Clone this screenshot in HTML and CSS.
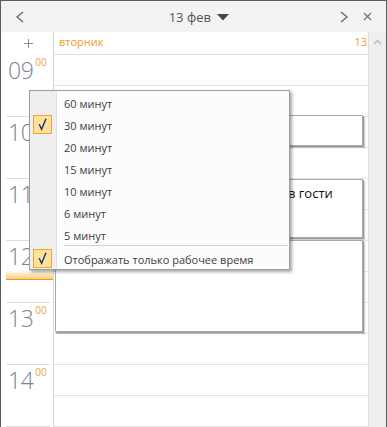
FILE: index.html
```html
<!DOCTYPE html>
<html lang="ru">
<head>
<meta charset="utf-8">
<title>Календарь</title>
<link rel="stylesheet" href="styles.css">
</head>
<body>
<div class="win">
  <header class="top">
    <svg class="ico prev" width="10" height="12" viewBox="0 0 10 12"><path d="M8 1 L2 6 L8 11" fill="none" stroke="#666" stroke-width="1.3"/></svg>
    <div class="title">13 фев <svg class="tri" width="12" height="7" viewBox="0 0 12 7"><path d="M0 0 H12 L6 6.5 Z" fill="#454545"/></svg></div>
    <svg class="ico next" width="10" height="12" viewBox="0 0 10 12"><path d="M2 1 L8 6 L2 11" fill="none" stroke="#666" stroke-width="1.3"/></svg>
    <svg class="ico close" width="9" height="9" viewBox="0 0 9 9"><path d="M1 1 L8 8 M8 1 L1 8" fill="none" stroke="#777" stroke-width="1.3"/></svg>
  </header>
  <div class="main">
    <div class="times">
      <div class="add"><svg width="9" height="9" viewBox="0 0 9 9"><path d="M4.5 0 V9 M0 4.5 H9" stroke="#8a8a8a" stroke-width="1"/></svg></div>
      <div class="hour"><span class="hh">09</span><span class="mm">00</span></div>
      <div class="hour"><span class="hh">10</span><span class="mm">00</span></div>
      <div class="hour"><span class="hh">11</span><span class="mm">00</span></div>
      <div class="hour"><span class="hh">12</span><span class="mm">00</span></div>
      <div class="hour"><span class="hh">13</span><span class="mm">00</span></div>
      <div class="hour"><span class="hh">14</span><span class="mm">00</span></div>
      <div class="now"></div>
    </div>
    <div class="day">
      <div class="dayhead"><span class="dname">вторник</span><span class="dnum">13</span></div>
      <div class="slots">
        <div class="slot"></div><div class="slot"></div><div class="slot"></div><div class="slot"></div>
        <div class="slot"></div><div class="slot"></div><div class="slot"></div><div class="slot"></div>
        <div class="slot"></div><div class="slot"></div><div class="slot"></div><div class="slot"></div>
      </div>
      <div class="event" style="top:83px;height:31px"></div>
      <div class="event" style="top:147px;height:59px">Вечером идём всей семьёй к маме в гости</div>
      <div class="event" style="top:208px;height:92px"></div>
    </div>
    <div class="scroll"><svg width="9" height="6" viewBox="0 0 9 6"><path d="M1 5 L4.5 1.5 L8 5" fill="none" stroke="#bcbcbc" stroke-width="1.5"/></svg></div>
  </div>

  <div class="menu">
    <div class="item"><span class="gut"></span><span class="lbl">60 минут</span></div>
    <div class="item"><span class="gut"><span class="chk"><svg width="17" height="17" viewBox="0 0 17 17"><path d="M5.2 8.3 L7.6 13.2 L12 2.8" fill="none" stroke="#232b6e" stroke-width="1.4"/></svg></span></span><span class="lbl">30 минут</span></div>
    <div class="item"><span class="gut"></span><span class="lbl">20 минут</span></div>
    <div class="item"><span class="gut"></span><span class="lbl">15 минут</span></div>
    <div class="item"><span class="gut"></span><span class="lbl">10 минут</span></div>
    <div class="item"><span class="gut"></span><span class="lbl">6 минут</span></div>
    <div class="item"><span class="gut"></span><span class="lbl">5 минут</span></div>
    <div class="sep"><span class="gut"></span><span class="line"></span></div>
    <div class="item"><span class="gut"><span class="chk"><svg width="17" height="17" viewBox="0 0 17 17"><path d="M5.2 8.3 L7.6 13.2 L12 2.8" fill="none" stroke="#232b6e" stroke-width="1.4"/></svg></span></span><span class="lbl">Отображать только рабочее время</span></div>
  </div>
</div>
</body>
</html>
```

FILE: styles.css
```css
* { box-sizing: border-box; }
html, body { margin: 0; padding: 0; background: #fff; }
body { font-family: "Open Sans", "Noto Sans", sans-serif; }

.win {
  position: relative;
  width: 387px;
  height: 427px;
  border: 1px solid #5c5c5c;
  border-bottom: none;
  overflow: hidden;
  background: #fff;
}

/* header */
.top {
  height: 31px;
  background: #f3f3f3;
  display: flex;
  align-items: center;
}
.ico { display: block; flex: none; }
.prev { margin-left: 14px; }
.title {
  flex: 1;
  text-align: center;
  padding-left: 34px;
  font-size: 13px;
  color: #555;
  line-height: 31px;
  padding-top: 1px;
  white-space: nowrap;
}
.tri { display: inline-block; vertical-align: 1px; margin-left: 3px; }
.close { margin-left: 14px; margin-right: 14px; }

/* main area */
.main {
  display: flex;
  height: 395px;
}
.times {
  position: relative;
  width: 52px;
  flex: none;
}
.add {
  height: 23px;
  display: flex;
  align-items: center;
  justify-content: center;
  padding-left: 2px;
}
.hour {
  height: 62px;
  margin: 0 3px 0 5px;
  border-bottom: 1px solid #dedede;
  display: flex;
  align-items: flex-start;
  padding: 4px 0 0 2px;
}
.hh {
  font-size: 23px;
  line-height: 23px;
  font-weight: 300;
  color: #7b8491;
  letter-spacing: -0.5px;
}
.mm {
  font-size: 10px;
  line-height: 10px;
  color: #e9a23f;
  margin: -2px 0 0 2px;
}
.now {
  position: absolute;
  left: 5px;
  right: 0;
  top: 239px;
  height: 9px;
  background: linear-gradient(to bottom, #fff9e8, #f7cf80);
  border-bottom: 1px solid #e39a2a;
}

.day {
  position: relative;
  flex: 1;
  border-left: 1px solid #d8d8d8;
  border-right: 1px solid #dcdcdc;
}
.dayhead {
  height: 23px;
  border-bottom: 1px solid #dedede;
  display: flex;
  justify-content: space-between;
  padding: 0 1px 0 5px;
  font-size: 11px;
  line-height: 20px;
  color: #f39a1e;
}
.slot {
  height: 31px;
  border-bottom: 1px solid #e4e4e4;
}
.event {
  position: absolute;
  left: 1px;
  width: 308px;
  background: #fff;
  border: 1px solid #a9a9a9;
  box-shadow: 1px 1px 0 #9c9c9c, 2px 2px 1px rgba(0,0,0,0.18);
  padding: 4px 4px 2px 7px;
  font-size: 13px;
  line-height: 18px;
  color: #111;
  white-space: nowrap;
  overflow: hidden;
}

.scroll {
  width: 17px;
  flex: none;
  background: #efefef;
  display: flex;
  justify-content: center;
  padding-top: 7px;
  align-items: flex-start;
}

/* popup menu */
.menu {
  position: absolute;
  left: 28px;
  top: 89px;
  width: 261px;
  border: 1px solid #9d9d9d;
  background: #fcfcfc;
  box-shadow: 2px 2px 3px rgba(0,0,0,0.35);
  font-size: 11px;
  color: #3d3d3d;
}
.item, .sep {
  display: flex;
}
.gut {
  width: 27px;
  flex: none;
  background: #efefef;
  border-right: 1px solid #e0e0e0;
  padding: 2px 0 0 3px;
}
.item { height: 22px; }
.lbl { line-height: 22px; padding: 2px 0 0 7px; white-space: nowrap; }
.sep { height: 2px; }
.sep .gut { padding: 0; }
.line {
  flex: 1;
  height: 1px;
  margin: 0 1px 0 7px;
  background: #cfcfcf;
}
.chk {
  display: block;
  width: 19px;
  height: 19px;
  border: 1px solid #f3a23a;
  background: #fde29c;
}
.chk svg { display: block; }
```
